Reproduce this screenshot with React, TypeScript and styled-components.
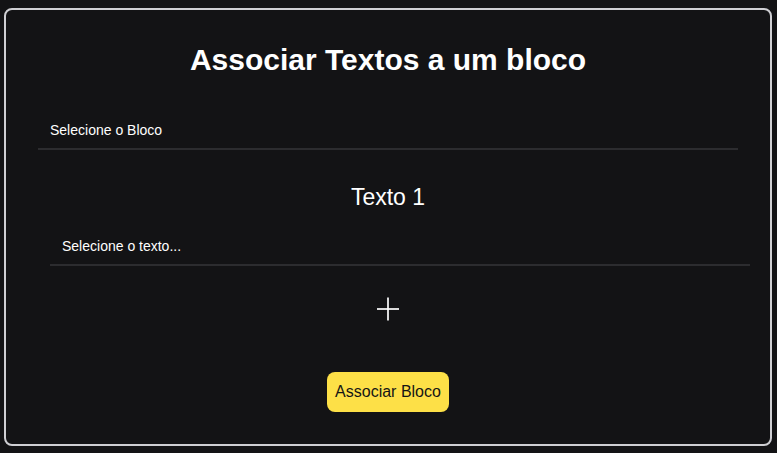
import React from "react";
import styled, { createGlobalStyle } from "styled-components";

const Global = createGlobalStyle`
  html, body {
    margin: 0;
    padding: 0;
    background: #131315;
    font-family: "Liberation Sans", Arial, sans-serif;
    color: #ffffff;
  }
  * { box-sizing: border-box; }
`;

const Card = styled.div`
  width: 768px;
  height: 438px;
  margin: 8px 5px 0 4px;
  border: 2px solid #cfcfd3;
  border-radius: 8px;
  padding: 32.5px 0 0;
  display: flex;
  flex-direction: column;
  align-items: center;
`;

const Title = styled.h1`
  margin: 0;
  font-size: 30px;
  font-weight: 700;
  line-height: 34.5px;
  color: #ffffff;
  text-align: center;
`;

const Select = styled.div<{ $shift?: number; $top: number }>`
  width: 700px;
  margin-top: ${(p) => p.$top}px;
  margin-left: ${(p) => (p.$shift ?? 0) * 2}px;
  padding: 10px 12px;
  font-size: 14px;
  line-height: 16px;
  color: #ffffff;
  border-bottom: 2px solid #2c2c2f;
`;

const Subtitle = styled.h2`
  margin: 34.5px 0 0;
  font-size: 23px;
  font-weight: 400;
  line-height: 26px;
  color: #ffffff;
`;

const AddButton = styled.button`
  margin-top: 30.5px;
  width: 24px;
  height: 24px;
  padding: 0;
  border: none;
  background: transparent;
  display: flex;
  align-items: center;
  justify-content: center;
  cursor: pointer;
`;

const Submit = styled.button`
  margin-top: 51.5px;
  height: 40px;
  padding: 0 8px;
  border: none;
  border-radius: 8px;
  background: #fde047;
  color: #151515;
  font-family: "Liberation Sans", Arial, sans-serif;
  font-size: 16px;
  cursor: pointer;
`;

export default function App() {
  return (
    <>
      <Global />
      <Card>
        <Title>Associar Textos a um bloco</Title>
        <Select $top={34.5}>Selecione o Bloco</Select>
        <Subtitle>Texto 1</Subtitle>
        <Select $top={18} $shift={12}>Selecione o texto...</Select>
        <AddButton aria-label="Adicionar texto">
          <svg width="24" height="24" viewBox="0 0 24 24">
            <line x1="1" y1="12" x2="23" y2="12" stroke="#ffffff" strokeWidth="1.7" />
            <line x1="12" y1="0.5" x2="12" y2="23.5" stroke="#ffffff" strokeWidth="1.7" />
          </svg>
        </AddButton>
        <Submit>Associar Bloco</Submit>
      </Card>
    </>
  );
}
